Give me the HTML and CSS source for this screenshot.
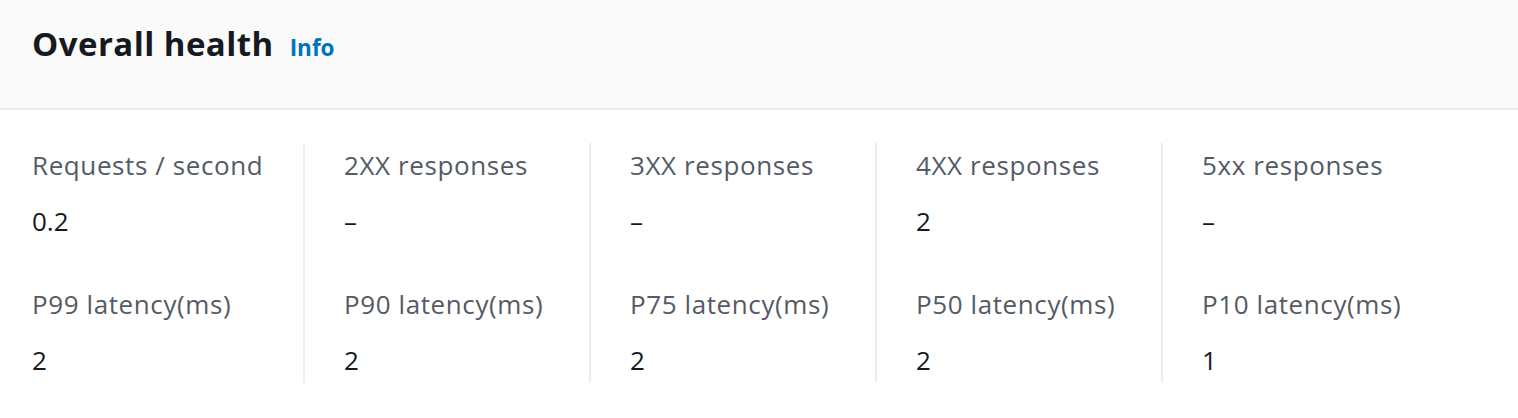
FILE: index.html
```html
<!DOCTYPE html>
<html lang="en">
<head>
<meta charset="utf-8">
<title>Overall health</title>
<link rel="stylesheet" href="styles.css">
</head>
<body>
<section class="container">
  <header class="header">
    <h2 class="title">Overall health</h2>
    <a class="info" href="#">Info</a>
  </header>
  <div class="grid">
    <div class="col first">
      <div class="kv"><div class="label">Requests / second</div><div class="value">0.2</div></div>
      <div class="kv"><div class="label">P99 latency(ms)</div><div class="value">2</div></div>
    </div>
    <div class="col">
      <div class="kv"><div class="label">2XX responses</div><div class="value">–</div></div>
      <div class="kv"><div class="label">P90 latency(ms)</div><div class="value">2</div></div>
    </div>
    <div class="col">
      <div class="kv"><div class="label">3XX responses</div><div class="value">–</div></div>
      <div class="kv"><div class="label">P75 latency(ms)</div><div class="value">2</div></div>
    </div>
    <div class="col">
      <div class="kv"><div class="label">4XX responses</div><div class="value">2</div></div>
      <div class="kv"><div class="label">P50 latency(ms)</div><div class="value">2</div></div>
    </div>
    <div class="col">
      <div class="kv"><div class="label">5xx responses</div><div class="value">–</div></div>
      <div class="kv"><div class="label">P10 latency(ms)</div><div class="value">1</div></div>
    </div>
  </div>
</section>
</body>
</html>
```
FILE: styles.css
```css
* { box-sizing: border-box; }
html, body {
  margin: 0;
  padding: 0;
  background: #ffffff;
  font-family: "Open Sans", "Noto Sans", Arial, sans-serif;
  color: #16191f;
}
.container {
  width: 1518px;
}
.header {
  height: 110px;
  background: #fafafa;
  border-bottom: 2px solid #eaeded;
  padding: 24px 32px 0 32px;
  display: flex;
  align-items: baseline;
  gap: 16px;
}
.title {
  margin: 0;
  font-size: 33px;
  line-height: 40px;
  font-weight: 700;
  letter-spacing: 0.45px;
  color: #16191f;
}
.info {
  font-size: 22.5px;
  font-weight: 700;
  color: #0073bb;
  text-decoration: none;
}
.grid {
  display: grid;
  grid-template-columns: 271px repeat(4, 286px);
  margin-top: 33px;
  padding-left: 32px;
}
.col {
  display: flex;
  flex-direction: column;
  gap: 49px;
  padding: 5px 0 6px 39px;
  border-left: 2px solid #eaeded;
}
.col.first {
  padding-left: 0;
  border-left: none;
}
.kv {
  display: flex;
  flex-direction: column;
  gap: 22px;
}
.label {
  font-size: 26px;
  line-height: 34px;
  letter-spacing: 0.6px;
  color: #545b64;
}
.value {
  font-size: 26px;
  line-height: 34px;
  color: #16191f;
}
```
